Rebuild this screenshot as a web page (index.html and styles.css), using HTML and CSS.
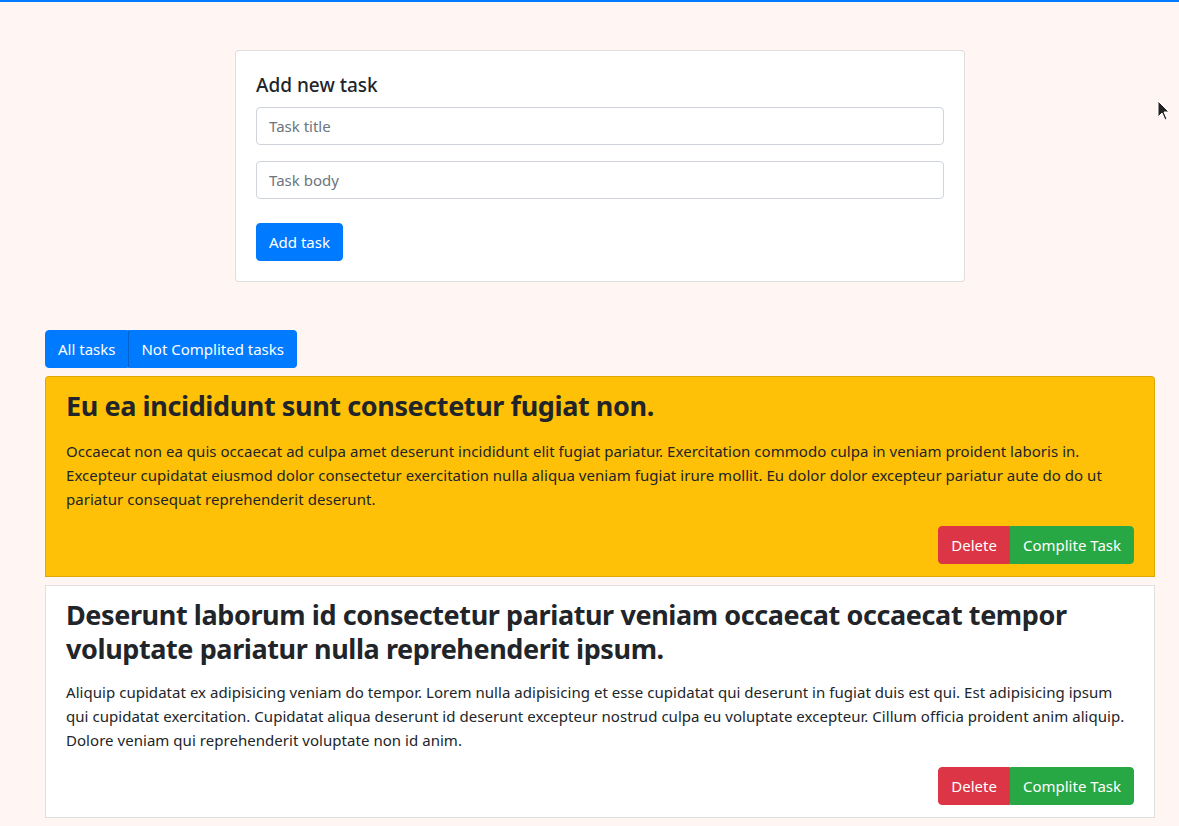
FILE: index.html
```html
<!DOCTYPE html>
<html lang="en">
<head>
<meta charset="utf-8">
<title>Tasks</title>
<link rel="stylesheet" href="styles.css">
</head>
<body>
<div class="topbar"></div>
<div class="page">
  <div class="form-row">
    <div class="card form-card">
      <h5 class="form-title">Add new task</h5>
      <div class="form-group"><input class="form-control" type="text" placeholder="Task title"></div>
      <div class="form-group"><input class="form-control" type="text" placeholder="Task body"></div>
      <button class="btn btn-primary add-btn">Add task</button>
    </div>
  </div>

  <div class="list">
    <div class="btn-group filter">
      <button class="btn btn-primary first">All tasks</button>
      <button class="btn btn-primary last">Not Complited tasks</button>
    </div>

    <div class="task task-warning">
      <h3 class="task-title">Eu ea incididunt sunt consectetur fugiat non.</h3>
      <p class="task-body">Occaecat non ea quis occaecat ad culpa amet deserunt incididunt elit fugiat pariatur. Exercitation commodo culpa in veniam proident laboris in. Excepteur cupidatat eiusmod dolor consectetur exercitation nulla aliqua veniam fugiat irure mollit. Eu dolor dolor excepteur pariatur aute do do ut pariatur consequat reprehenderit deserunt.</p>
      <div class="actions">
        <div class="btn-group">
          <button class="btn btn-danger first">Delete</button>
          <button class="btn btn-success last">Complite Task</button>
        </div>
      </div>
    </div>

    <div class="task task-plain">
      <h3 class="task-title">Deserunt laborum id consectetur pariatur veniam occaecat occaecat tempor voluptate pariatur nulla reprehenderit ipsum.</h3>
      <p class="task-body">Aliquip cupidatat ex adipisicing veniam do tempor. Lorem nulla adipisicing et esse cupidatat qui deserunt in fugiat duis est qui. Est adipisicing ipsum qui cupidatat exercitation. Cupidatat aliqua deserunt id deserunt excepteur nostrud culpa eu voluptate excepteur. Cillum officia proident anim aliquip. Dolore veniam qui reprehenderit voluptate non id anim.</p>
      <div class="actions">
        <div class="btn-group">
          <button class="btn btn-danger first">Delete</button>
          <button class="btn btn-success last">Complite Task</button>
        </div>
      </div>
    </div>
  </div>
</div>
<svg class="cursor" width="14" height="22" viewBox="0 0 14 22"><path d="M1 1 L1 17 L5 13 L8 20 L10 19 L7 12 L12 12 Z" fill="#222" stroke="#fff" stroke-width="1"/></svg>
</body>
</html>
```

FILE: styles.css
```css
* { box-sizing: border-box; }
html, body { margin: 0; padding: 0; }
body {
  background: #fff6f3;
  font-family: "Noto Sans", "Open Sans", sans-serif;
  font-size: 15px;
  line-height: 24px;
  color: #212529;
  overflow: hidden;
}
.topbar { height: 2px; background: #007bff; }
.page { padding-top: 48px; }
.form-row { padding-left: 235px; }
.card {
  background: #fff;
  border: 1px solid rgba(0,0,0,.125);
  border-radius: 4px;
}
.form-card { width: 730px; padding: 20px; }
.form-title {
  margin: 0 0 12px;
  padding-top: 2px;
  height: 24px;
  font-size: 19px;
  font-weight: 500;
  line-height: 24px;
}
.form-group { margin-bottom: 16px; }
.form-control {
  display: block;
  width: 100%;
  height: 38px;
  padding: 6px 12px;
  font: inherit;
  font-size: 15px;
  line-height: 24px;
  color: #495057;
  background: #fff;
  border: 1px solid #ced4da;
  border-radius: 4px;
  outline: none;
}
.form-control::placeholder { color: #6c757d; }
.btn {
  display: inline-block;
  height: 38px;
  padding: 0 12px;
  font: inherit;
  font-size: 15px;
  line-height: 36px;
  color: #fff;
  border: 1px solid transparent;
  border-radius: 4px;
  cursor: pointer;
}
.btn-primary { background: #007bff; border-color: #007bff; }
.btn-danger { background: #dc3545; border-color: #dc3545; }
.btn-success { background: #28a745; border-color: #28a745; }
.add-btn { margin-top: 8px; }
.list { padding-left: 45px; width: 1155px; margin-top: 48px; }
.btn-group { display: inline-flex; }
.btn-group .first { border-top-right-radius: 0; border-bottom-right-radius: 0; }
.btn-group .last { border-top-left-radius: 0; border-bottom-left-radius: 0; }
.filter .last { border-left-color: #0062cc; }
.filter { margin-bottom: 8px; vertical-align: top; }
.task {
  border: 1px solid rgba(0,0,0,.125);
  padding: 12px 20px;
  margin-bottom: 8px;
}
.task-warning { background: #ffc107; border-radius: 4px 4px 0 0; }
.task-plain { background: #fff; }
.task-title {
  margin: 0 0 16px;
  font-size: 27px;
  font-weight: 700;
  line-height: 34px;
  letter-spacing: -0.4px;
}
.task-body { margin: 0 0 15px; letter-spacing: 0.04px; }
.task-plain .task-title { margin-bottom: 14px; }
.actions { display: flex; justify-content: flex-end; }
.cursor { position: absolute; left: 1157px; top: 100px; }
```
